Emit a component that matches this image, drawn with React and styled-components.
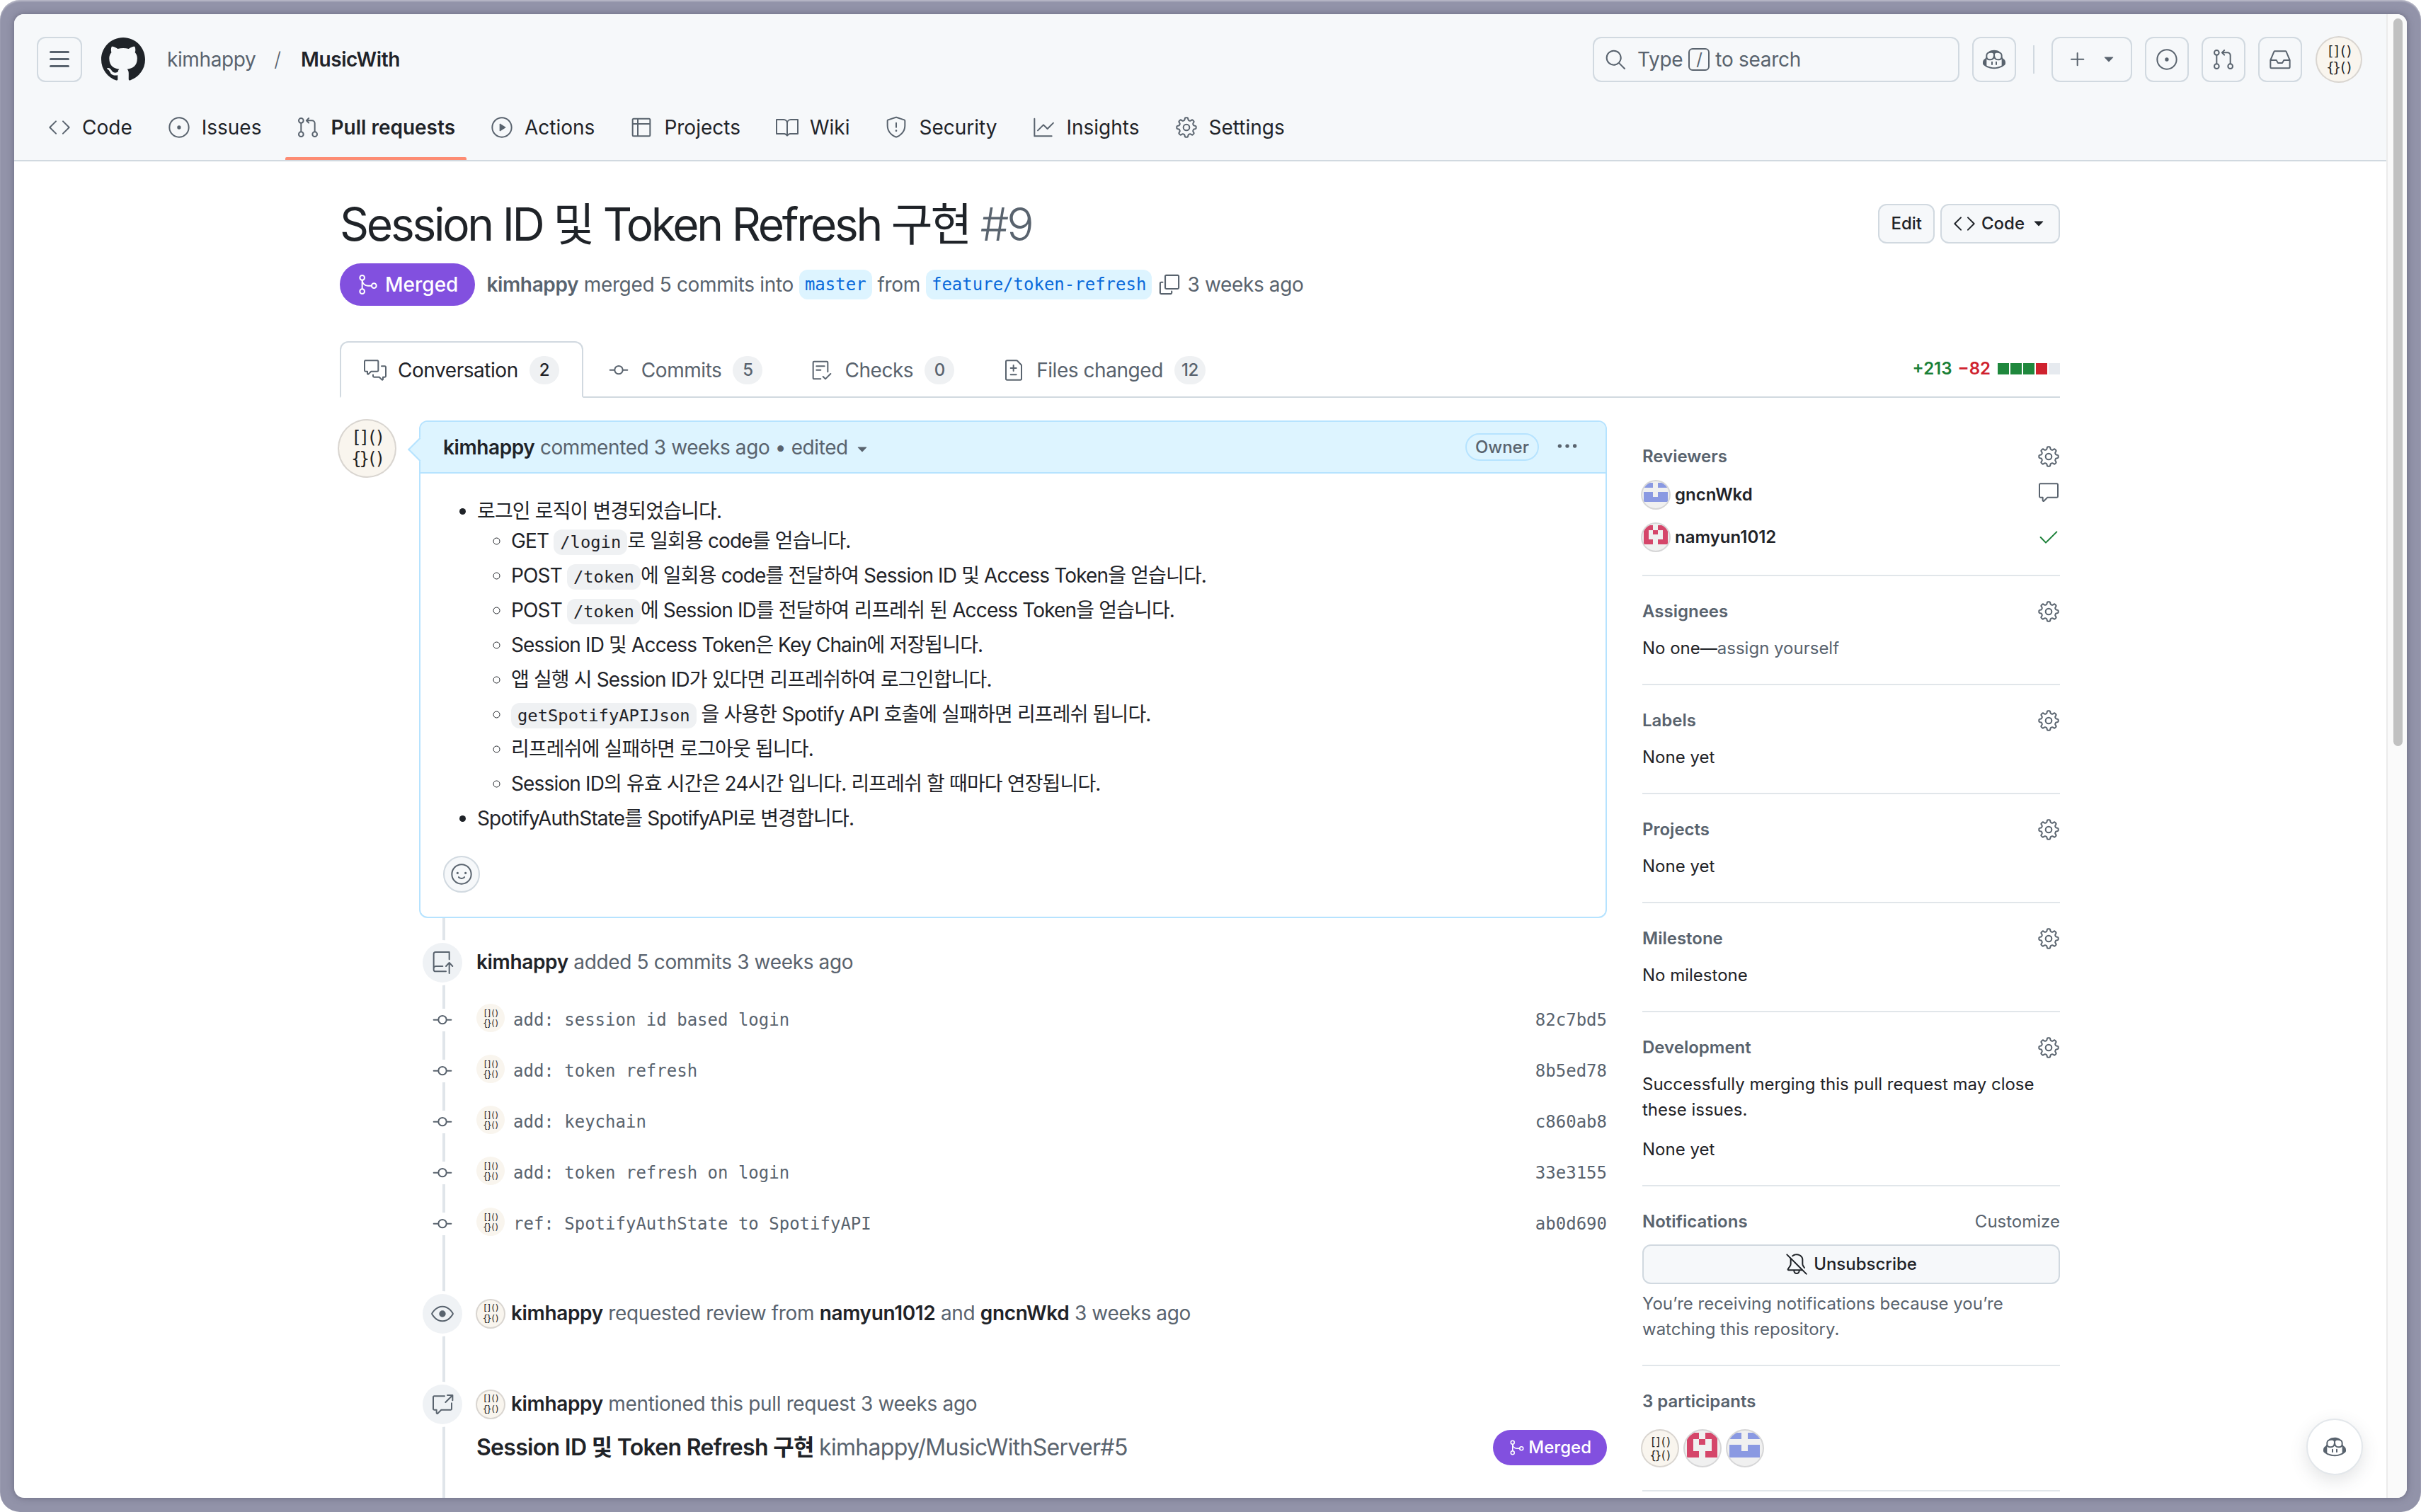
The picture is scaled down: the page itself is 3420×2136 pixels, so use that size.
import React from "react";
import styled, { createGlobalStyle } from "styled-components";
import {
  GoCode, GoIssueOpened, GoGitPullRequest, GoPlay, GoTable, GoBook, GoShield, GoGraph, GoGear,
  GoSearch, GoCopilot, GoPlus, GoInbox, GoTriangleDown, GoGitMerge, GoCopy, GoCommentDiscussion, GoGitCommit, GoChecklist,
  GoFileDiff, GoSmiley, GoKebabHorizontal, GoComment, GoCheck, GoBellSlash, GoEye, GoCrossReference, GoRepoPush,
} from "react-icons/go";

const FONT = `Inter, "Noto Sans CJK KR", "Liberation Sans", sans-serif`;
const MONO = `"DejaVu Sans Mono", "Liberation Mono", monospace`;
const FG = "#1f2328";
const MUTED = "#59636e";
const LINE = "#d1d9e0";

const Global = createGlobalStyle`
  html, body { margin: 0; padding: 0; background: #fff; overflow: hidden; }
  body { font-family: ${FONT}; font-size: 28px; line-height: 1.5; color: ${FG}; }
  * { box-sizing: border-box; }
`;

const Backdrop = styled.div`
  height: 2136px;
  padding: 20px;
  background: #9293a9;
  border-radius: 28px;
  box-shadow: inset 0 2px 2px rgba(255,255,255,.35);
`;
const Win = styled.div`
  position: relative;
  display: flex;
  height: 2096px;
  background: #fff;
  border-radius: 14px;
  overflow: hidden;
  box-shadow: 0 0 10px rgba(70,70,90,.55);
`;
const Page = styled.div`
  flex: 1;
  min-width: 0;
  overflow: hidden;
`;
const ScrollTrack = styled.div`
  width: 29px;
  flex: none;
  padding: 6px 6px 0 8px;
  background: #fafafa;
  border-left: 2px solid #ececec;
`;
const ScrollThumb = styled.div`
  height: 1028px;
  background: #c1c1c1;
  border-radius: 8px;
`;
const Header = styled.header`
  background: #f6f8fa;
  border-bottom: 2px solid ${LINE};
  padding: 32px 34px 14px 32px;
`;
const TopBar = styled.div`
  display: flex;
  align-items: center;
  height: 64px;
`;
const IconBtn = styled.div`
  width: ${p => p.$w || 62}px;
  height: 64px;
  flex: none;
  display: flex;
  align-items: center;
  justify-content: center;
  gap: ${p => p.$gap || 0}px;
  margin-left: ${p => p.$ml ?? 18}px;
  border: 2px solid ${LINE};
  border-radius: 12px;
  color: ${MUTED};
`;
const AvatarSlot = styled.div`
  margin-left: 19px;
  flex: none;
`;
const Logo = styled.div`
  display: flex;
  margin-left: 27px;
  margin-right: 31px;
`;
const Crumb = styled.span`
  color: ${p => (p.$strong ? FG : MUTED)};
  font-weight: ${p => (p.$strong ? 600 : 400)};
  letter-spacing: -0.4px;
`;
const CrumbSep = styled.span`
  color: ${MUTED};
  font-weight: 300;
  margin: 0 28px 0 26px;
`;
const SearchBox = styled.div`
  width: 518px;
  height: 64px;
  margin-left: auto;
  display: flex;
  align-items: center;
  padding-left: 14px;
  border: 2px solid ${LINE};
  border-radius: 12px;
  color: ${MUTED};
`;
const SearchLabel = styled.span`
  margin-left: 15px;
  display: flex;
  align-items: center;
  gap: 8px;
  letter-spacing: -0.3px;
`;
const Kbd = styled.span`
  width: 30px;
  height: 32px;
  display: flex;
  align-items: center;
  justify-content: center;
  font-size: 24px;
  border: 2px solid ${MUTED};
  border-radius: 6px;
`;
const VRule = styled.div`
  width: 2px;
  height: 40px;
  margin: 0 24px;
  background: ${LINE};
`;
const TabNav = styled.nav`
  display: flex;
  gap: 18px;
  margin-top: 32px;
`;
const NavItem = styled.div`
  position: relative;
  height: 64px;
  display: flex;
  align-items: center;
  gap: 16px;
  padding: 0 16px;
  font-weight: ${p => (p.$active ? 600 : 400)};
  color: ${FG};
  svg { color: ${MUTED}; }
  ${p => p.$active && `&::after {
    content: "";
    position: absolute;
    left: 0; right: 0; bottom: -14px;
    height: 4px;
    background: #fd8c73;
    border-radius: 2px 2px 0 0;
  }`}
`;
const Main = styled.main`
  width: 2430px;
  margin-left: 460px;
`;
const TitleRow = styled.div`
  display: flex;
  justify-content: space-between;
  align-items: flex-start;
  padding-top: 49px;
`;
const Title = styled.h1`
  margin: 0;
  font-size: 64px;
  line-height: 80px;
  font-weight: 400;
  letter-spacing: -3.25px;
`;
const TitleNum = styled.span`
  color: ${MUTED};
  font-weight: 300;
`;
const Actions = styled.div`
  display: flex;
  gap: 8px;
  padding-top: 11px;
`;
const SmallBtn = styled.div`
  height: 56px;
  display: flex;
  align-items: center;
  gap: 8px;
  padding: 0 16px;
  background: #f6f8fa;
  border: 2px solid ${LINE};
  border-radius: 12px;
  font-size: 24px;
  font-weight: 500;
`;
const MetaRow = styled.div`
  display: flex;
  align-items: center;
  margin-top: 15px;
  color: ${MUTED};
  letter-spacing: -0.35px;
`;
const StatePill = styled.div`
  height: ${p => (p.$small ? 50 : 60)}px;
  display: flex;
  align-items: center;
  gap: ${p => (p.$small ? 4 : 8)}px;
  padding: 0 ${p => (p.$small ? 22 : 24)}px;
  background: #8250df;
  border-radius: 999px;
  color: #fff;
  font-size: ${p => (p.$small ? 24 : 28)}px;
  font-weight: 500;
  letter-spacing: 0;
`;
const MetaText = styled.span`
  margin-left: ${p => p.$ml || 0}px;
  white-space: pre;
`;
const Strong = styled.b`
  color: ${p => p.$muted ? MUTED : FG};
  font-weight: 600;
`;
const Branch = styled.span`
  height: 42px;
  display: inline-flex;
  align-items: center;
  padding: 0 8px;
  margin: 0 8px;
  font-family: ${MONO};
  font-size: 24px;
  letter-spacing: 0;
  color: #0969da;
  background: #ddf4ff;
  border-radius: 12px;
`;
const TabsRow = styled.div`
  display: flex;
  align-items: flex-end;
  margin-top: 50px;
  height: 80px;
  border-bottom: 2px solid ${LINE};
`;
const PrTab = styled.div`
  height: 80px;
  margin-bottom: -2px;
  display: flex;
  align-items: center;
  gap: 16px;
  padding: 2px 32px 0;
  letter-spacing: -0.45px;
  color: ${p => (p.$active ? FG : MUTED)};
  background: ${p => (p.$active ? "#fff" : "transparent")};
  border: 2px solid ${p => (p.$active ? LINE : "transparent")};
  border-bottom: 2px solid ${p => (p.$active ? "#fff" : "transparent")};
  border-radius: 12px 12px 0 0;
  svg { color: ${MUTED}; }
`;
const Counter = styled.span`
  min-width: 42px;
  height: 40px;
  padding: 0 10px;
  display: flex;
  align-items: center;
  justify-content: center;
  font-size: 24px;
  font-weight: 500;
  background: #eff1f3;
  border-radius: 999px;
`;
const DiffStat = styled.div`
  margin-left: auto;
  align-self: center;
  display: flex;
  align-items: center;
  gap: 8px;
  font-size: 24px;
  font-weight: 600;
`;
const Add = styled.span` color: #1a7f37; `;
const Del = styled.span` color: #cf222e; `;
const Bars = styled.span`
  display: flex;
  gap: 2px;
  margin-left: 2px;
`;
const Bar = styled.span`
  width: 16px;
  height: 16px;
  background: ${p => p.$c};
`;
const Columns = styled.div`
  display: flex;
  align-items: flex-start;
  gap: 50px;
`;
const Discussion = styled.div`
  flex: none;
  width: 1790px;
  padding-top: 30px;
`;
const CommentRow = styled.div`
  display: flex;
  align-items: flex-start;
  gap: 32px;
  margin-left: -3px;
`;
const AvatarCircle = styled.div`
  width: ${p => p.$s}px;
  height: ${p => p.$s}px;
  flex: none;
  display: flex;
  flex-direction: column;
  align-items: center;
  justify-content: center;
  background: #f9f5ee;
  border: 2px solid ${p => (p.$flat ? "transparent" : "rgba(31,35,40,.15)")};
  border-radius: 50%;
  font-family: ${MONO};
  font-size: ${p => p.$s * 0.29}px;
  line-height: 1.22;
  letter-spacing: -0.14em;
  color: #222;
  font-weight: 400;
  overflow: hidden;
  white-space: pre;
`;
const IdentCircle = styled.div`
  width: ${p => p.$s}px;
  height: ${p => p.$s}px;
  flex: none;
  display: flex;
  align-items: center;
  justify-content: center;
  background: #f0f0f0;
  border: 2px solid rgba(31,35,40,.12);
  border-radius: 50%;
  overflow: hidden;
`;
const Comment = styled.section`
  position: relative;
  flex: 1;
  margin-top: 2px;
  border: 2px solid #b6e3ff;
  border-radius: 12px;
`;
const CommentHead = styled.div`
  height: 73px;
  display: flex;
  align-items: center;
  padding: 0 38px 0 32px;
  background: #ddf4ff;
  border-bottom: 2px solid #b6e3ff;
  border-radius: 10px 10px 0 0;
  color: ${MUTED};
  letter-spacing: -0.4px;
  &::before {
    content: "";
    position: absolute;
    left: -13px;
    top: 27px;
    width: 22px;
    height: 22px;
    background: #ddf4ff;
    border-left: 2px solid #b6e3ff;
    border-bottom: 2px solid #b6e3ff;
    transform: rotate(45deg);
  }
`;
const HeadCaret = styled.span`
  display: flex;
  margin-left: 8px;
  margin-top: 6px;
`;
const OwnerBadge = styled.span`
  margin-left: auto;
  height: 39px;
  display: flex;
  align-items: center;
  padding: 0 12px;
  border: 2px solid #b6e3ff;
  border-radius: 999px;
  font-size: 24px;
  font-weight: 500;
  letter-spacing: 0;
`;
const Kebab = styled.span`
  display: flex;
  margin-left: 24px;
  color: ${MUTED};
  margin-top: -4px;
`;
const CommentBody = styled.div`
  padding: 32px 32px 34px;
`;
const OuterList = styled.ul`
  margin: 0;
  padding-left: 48px;
  list-style: disc;
  letter-spacing: -0.85px;
  & > li + li { margin-top: 7px; }
`;
const InnerList = styled.ul`
  margin: 0;
  padding-left: 48px;
  list-style: circle;
  & > li { margin-top: 7px; }
  & > li:first-child { margin-top: 0; }
`;
const Code = styled.code`
  padding: 4px 9px;
  font-family: ${MONO};
  font-size: 23.8px;
  letter-spacing: 0;
  background: #eff1f3;
  border-radius: 12px;
`;
const ReactBtn = styled.div`
  width: 52px;
  height: 52px;
  margin-top: 32px;
  display: flex;
  align-items: center;
  justify-content: center;
  background: #f6f8fa;
  border: 2px solid ${LINE};
  border-radius: 50%;
  color: ${MUTED};
`;
const Timeline = styled.div`
  position: relative;
  margin-left: 112px;
  padding: 35px 0 80px 5px;
  &::before {
    content: "";
    position: absolute;
    left: 33px;
    top: 0;
    bottom: 0;
    width: 4px;
    background: #e0e5ea;
  }
`;
const Event = styled.div`
  position: relative;
  display: flex;
  align-items: center;
  min-height: 56px;
  margin-top: ${p => p.$mt || 0}px;
  color: ${MUTED};
  letter-spacing: -0.35px;
`;
const Badge = styled.div`
  width: 56px;
  height: 56px;
  flex: none;
  display: flex;
  align-items: center;
  justify-content: center;
  margin-right: ${p => p.$mr ?? 20}px;
  background: #eff2f5;
  border-radius: 50%;
  box-shadow: 0 0 0 4px #fff;
  color: ${MUTED};
`;
const EventText = styled.span`
  margin: -2px 0 0 ${p => p.$ml || 0}px;
  white-space: pre;
`;
const Commits = styled.div`
  position: relative;
  margin-top: 17px;
`;
const CommitRow = styled.div`
  display: flex;
  align-items: center;
  height: 72px;
  color: ${MUTED};
  font-family: ${MONO};
  font-size: 24px;
`;
const CommitMark = styled.div`
  width: 56px;
  flex: none;
  display: flex;
  justify-content: center;
  margin-right: 20px;
  svg { display: block; background: #fff; }
`;
const CommitAvatar = styled.div`
  margin: -6px 12px 0 0;
`;
const Sha = styled.span`
  margin-left: auto;
`;
const RefRow = styled.div`
  position: relative;
  display: flex;
  align-items: center;
  justify-content: space-between;
  height: 50px;
  margin-top: 8px;
  padding-left: 76px;
`;
const RefTitle = styled.div`
  font-size: 32px;
  font-weight: 600;
  white-space: pre;
  letter-spacing: -0.7px;
`;
const RefSub = styled.span`
  font-weight: 400;
  color: ${MUTED};
`;
const Sidebar = styled.aside`
  flex: 1;
  min-width: 0;
  padding-top: 33px;
  font-size: 24px;
  line-height: 36px;
`;
const Section = styled.section`
  padding: 32px 0 ${p => p.$pb ?? 32}px;
  border-bottom: 2px solid #e1e6ea;
`;
const SecHead = styled.div`
  display: flex;
  justify-content: space-between;
  align-items: center;
  height: 36px;
  font-weight: 600;
  color: ${MUTED};
  margin-bottom: ${p => p.$mb ?? 16}px;
  svg { color: ${MUTED}; }
`;
const SecLink = styled.span`
  font-weight: 400;
`;
const Reviewer = styled.div`
  display: flex;
  align-items: center;
  gap: 6px;
  height: 60px;
  font-weight: 600;
  margin-left: -2px;
`;
const RevIcon = styled.span`
  margin-left: auto;
  display: flex;
  color: ${p => p.$c || MUTED};
  margin-top: ${p => p.$mt || 0}px;
`;
const Muted = styled.span` color: ${MUTED}; `;
const Para = styled.p`
  margin: ${p => p.$mt || 0}px 0 0;
  color: ${p => p.$muted ? MUTED : FG};
`;
const WideBtn = styled.div`
  height: 56px;
  display: flex;
  align-items: center;
  justify-content: center;
  gap: 8px;
  background: #f6f8fa;
  border: 2px solid ${LINE};
  border-radius: 12px;
  font-weight: 500;
`;
const Participants = styled.div`
  display: flex;
  gap: 6px;
  margin: 21px 0 0 -2px;
`;
const Fab = styled.div`
  position: absolute;
  right: 62px;
  bottom: 32px;
  width: 80px;
  height: 80px;
  display: flex;
  align-items: center;
  justify-content: center;
  background: #fff;
  border: 2px solid #e3e7eb;
  border-radius: 50%;
  box-shadow: 0 8px 24px rgba(66,74,83,.15);
  color: ${MUTED};
`;

const ThreeBars = () => (
  <svg width="32" height="32" viewBox="0 0 16 16" fill="currentColor">
    <path d="M1 2.75A.75.75 0 0 1 1.75 2h12.5a.75.75 0 0 1 0 1.5H1.75A.75.75 0 0 1 1 2.75Zm0 5A.75.75 0 0 1 1.75 7h12.5a.75.75 0 0 1 0 1.5H1.75A.75.75 0 0 1 1 7.75ZM1.75 12h12.5a.75.75 0 0 1 0 1.5H1.75a.75.75 0 0 1 0-1.5Z" />
  </svg>
);
const GithubMark = () => (
  <svg width="62" height="62" viewBox="0 0 16 16" fill={FG}>
    <path d="M8 0c4.42 0 8 3.58 8 8a8.013 8.013 0 0 1-5.45 7.59c-.4.08-.55-.17-.55-.38 0-.27.01-1.13.01-2.2 0-.75-.25-1.23-.54-1.48 1.78-.2 3.65-.88 3.65-3.95 0-.88-.31-1.59-.82-2.15.08-.2.36-1.02-.08-2.12 0 0-.67-.22-2.2.82-.64-.18-1.32-.27-2-.27-.68 0-1.36.09-2 .27-1.53-1.03-2.2-.82-2.2-.82-.44 1.1-.16 1.92-.08 2.12-.51.56-.82 1.28-.82 2.15 0 3.06 1.86 3.75 3.64 3.95-.23.2-.44.55-.51 1.07-.46.21-1.61.55-2.33-.66-.15-.24-.6-.83-1.23-.82-.67.01-.27.38.01.53.34.19.73.9.82 1.13.16.45.68 1.31 2.69.94 0 .67.01 1.3.01 1.49 0 .21-.15.45-.55.38A7.995 7.995 0 0 1 0 8c0-4.42 3.58-8 8-8Z" />
  </svg>
);

const Me = ({ s, flat }) => (
  <AvatarCircle $s={s} $flat={flat}>
    <span>[]()</span>
    <span>{"{}()"}</span>
  </AvatarCircle>
);

const BLUE = [[0,1,3,4], [], [0,1,3,4], [0,1,2,3,4], []];
const RED = [[0,1,3,4], [0,2,4], [0,4], [0,1,3,4], []];
const Ident = ({ s, rows, color }) => (
  <IdentCircle $s={s}>
    <svg width={s * 0.8} height={s * 0.8} viewBox="0 0 5 5" shapeRendering="crispEdges">
      {rows.flatMap((r, y) => r.map(x => <rect key={`${x}-${y}`} x={x} y={y} width="1" height="1" fill={color} />))}
    </svg>
  </IdentCircle>
);

const NAV = [
  [GoCode, "Code"], [GoIssueOpened, "Issues"], [GoGitPullRequest, "Pull requests", true], [GoPlay, "Actions"],
  [GoTable, "Projects"], [GoBook, "Wiki"], [GoShield, "Security"], [GoGraph, "Insights"], [GoGear, "Settings"],
];
const COMMITS = [
  ["add: session id based login", "82c7bd5"], ["add: token refresh", "8b5ed78"], ["add: keychain", "c860ab8"],
  ["add: token refresh on login", "33e3155"], ["ref: SpotifyAuthState to SpotifyAPI", "ab0d690"],
];

export default function App() {
  return (
    <>
      <Global />
      <Backdrop>
        <Win>
          <Page>
            <Header>
              <TopBar>
                <IconBtn $w={64} $ml={0}><ThreeBars /></IconBtn>
                <Logo><GithubMark /></Logo>
                <Crumb>kimhappy</Crumb>
                <CrumbSep>/</CrumbSep>
                <Crumb $strong>MusicWith</Crumb>
                <SearchBox>
                  <GoSearch size={32} />
                  <SearchLabel>Type <Kbd>/</Kbd> to search</SearchLabel>
                </SearchBox>
                <IconBtn><GoCopilot size={32} /></IconBtn>
                <VRule />
                <IconBtn $w={114} $ml={0} $gap={16}><GoPlus size={32} /><GoTriangleDown size={24} /></IconBtn>
                <IconBtn><GoIssueOpened size={32} /></IconBtn>
                <IconBtn><GoGitPullRequest size={32} /></IconBtn>
                <IconBtn><GoInbox size={32} /></IconBtn>
                <AvatarSlot><Me s={66} /></AvatarSlot>
              </TopBar>
              <TabNav>
                {NAV.map(([I, t, a]) => <NavItem key={t} $active={a}><I size={32} />{t}</NavItem>)}
              </TabNav>
            </Header>
            <Main>
              <TitleRow>
                <Title>Session ID 및 Token Refresh 구현 <TitleNum>#9</TitleNum></Title>
                <Actions>
                  <SmallBtn>Edit</SmallBtn>
                  <SmallBtn><GoCode size={32} />Code<GoTriangleDown size={24} /></SmallBtn>
                </Actions>
              </TitleRow>
              <MetaRow>
                <StatePill><GoGitMerge size={32} />Merged</StatePill>
                <MetaText $ml={16}><Strong $muted>kimhappy</Strong> merged 5 commits into</MetaText>
                <Branch>master</Branch>
                <MetaText>from</MetaText>
                <Branch>feature/token-refresh</Branch>
                <GoCopy size={34} />
                <MetaText $ml={8}>3 weeks ago</MetaText>
              </MetaRow>
              <TabsRow>
                <PrTab $active><GoCommentDiscussion size={32} />Conversation<Counter>2</Counter></PrTab>
                <PrTab><GoGitCommit size={32} />Commits<Counter>5</Counter></PrTab>
                <PrTab><GoChecklist size={32} />Checks<Counter>0</Counter></PrTab>
                <PrTab><GoFileDiff size={32} />Files changed<Counter>12</Counter></PrTab>
                <DiffStat>
                  <Add>+213</Add><Del>−82</Del>
                  <Bars>
                    <Bar $c="#1f883d" /><Bar $c="#1f883d" /><Bar $c="#1f883d" /><Bar $c="#cf222e" /><Bar $c="#e6eaef" />
                  </Bars>
                </DiffStat>
              </TabsRow>
              <Columns>
                <Discussion>
                  <CommentRow>
                    <Me s={83} />
                    <Comment>
                      <CommentHead>
                        <Strong>kimhappy</Strong>&nbsp;commented 3 weeks ago • edited
                        <HeadCaret><GoTriangleDown size={24} /></HeadCaret>
                        <OwnerBadge>Owner</OwnerBadge>
                        <Kebab><GoKebabHorizontal size={32} /></Kebab>
                      </CommentHead>
                      <CommentBody>
                        <OuterList>
                          <li>
                            로그인 로직이 변경되었습니다.
                            <InnerList>
                              <li>GET <Code>/login</Code>로 일회용 code를 얻습니다.</li>
                              <li>POST <Code>/token</Code>에 일회용 code를 전달하여 Session ID 및 Access Token을 얻습니다.</li>
                              <li>POST <Code>/token</Code>에 Session ID를 전달하여 리프레쉬 된 Access Token을 얻습니다.</li>
                              <li>Session ID 및 Access Token은 Key Chain에 저장됩니다.</li>
                              <li>앱 실행 시 Session ID가 있다면 리프레쉬하여 로그인합니다.</li>
                              <li><Code>getSpotifyAPIJson</Code> 을 사용한 Spotify API 호출에 실패하면 리프레쉬 됩니다.</li>
                              <li>리프레쉬에 실패하면 로그아웃 됩니다.</li>
                              <li>Session ID의 유효 시간은 24시간 입니다. 리프레쉬 할 때마다 연장됩니다.</li>
                            </InnerList>
                          </li>
                          <li>SpotifyAuthState를 SpotifyAPI로 변경합니다.</li>
                        </OuterList>
                        <ReactBtn><GoSmiley size={32} /></ReactBtn>
                      </CommentBody>
                    </Comment>
                  </CommentRow>
                  <Timeline>
                    <Event>
                      <Badge><GoRepoPush size={32} /></Badge>
                      <EventText><Strong>kimhappy</Strong> added 5 commits 3 weeks ago</EventText>
                    </Event>
                    <Commits>
                      {COMMITS.map(([m, h]) => (
                        <CommitRow key={h}>
                          <CommitMark><GoGitCommit size={32} /></CommitMark>
                          <CommitAvatar><Me s={40} flat /></CommitAvatar>
                          <span>{m}</span>
                          <Sha>{h}</Sha>
                        </CommitRow>
                      ))}
                    </Commits>
                    <Event $mt={63}>
                      <Badge $mr={19}><GoEye size={32} /></Badge>
                      <Me s={42} />
                      <EventText $ml={8}><Strong>kimhappy</Strong> requested review from <Strong>namyun1012</Strong> and <Strong>gncnWkd</Strong> 3 weeks ago</EventText>
                    </Event>
                    <Event $mt={72}>
                      <Badge $mr={19}><GoCrossReference size={32} /></Badge>
                      <Me s={42} />
                      <EventText $ml={8}><Strong>kimhappy</Strong> mentioned this pull request 3 weeks ago</EventText>
                    </Event>
                    <RefRow>
                      <RefTitle>Session ID 및 Token Refresh 구현 <RefSub>kimhappy/MusicWithServer#5</RefSub></RefTitle>
                      <StatePill $small><GoGitMerge size={24} />Merged</StatePill>
                    </RefRow>
                  </Timeline>
                </Discussion>
                <Sidebar>
                  <Section $pb={23}>
                    <SecHead $mb={6}>Reviewers<GoGear size={32} /></SecHead>
                    <Reviewer>
                      <Ident s={42} rows={BLUE} color="#8a99e2" />gncnWkd
                      <RevIcon $mt={-8}><GoComment size={32} /></RevIcon>
                    </Reviewer>
                    <Reviewer>
                      <Ident s={42} rows={RED} color="#d5466a" />namyun1012
                      <RevIcon $c="#1a7f37"><GoCheck size={32} /></RevIcon>
                    </Reviewer>
                  </Section>
                  <Section>
                    <SecHead>Assignees<GoGear size={32} /></SecHead>
                    No one—<Muted>assign yourself</Muted>
                  </Section>
                  <Section>
                    <SecHead>Labels<GoGear size={32} /></SecHead>
                    None yet
                  </Section>
                  <Section>
                    <SecHead>Projects<GoGear size={32} /></SecHead>
                    None yet
                  </Section>
                  <Section>
                    <SecHead>Milestone<GoGear size={32} /></SecHead>
                    No milestone
                  </Section>
                  <Section>
                    <SecHead>Development<GoGear size={32} /></SecHead>
                    <Para>Successfully merging this pull request may close these issues.</Para>
                    <Para $mt={20}>None yet</Para>
                  </Section>
                  <Section>
                    <SecHead $mb={14}>Notifications<SecLink>Customize</SecLink></SecHead>
                    <WideBtn><GoBellSlash size={32} />Unsubscribe</WideBtn>
                    <Para $muted $mt={10}>You’re receiving notifications because you’re watching this repository.</Para>
                  </Section>
                  <Section>
                    <SecHead $mb={0}>3 participants</SecHead>
                    <Participants>
                      <Me s={54} />
                      <Ident s={54} rows={RED} color="#d5466a" />
                      <Ident s={54} rows={BLUE} color="#8a99e2" />
                    </Participants>
                  </Section>
                </Sidebar>
              </Columns>
            </Main>
          </Page>
          <ScrollTrack><ScrollThumb /></ScrollTrack>
          <Fab><GoCopilot size={32} /></Fab>
        </Win>
      </Backdrop>
    </>
  );
}
